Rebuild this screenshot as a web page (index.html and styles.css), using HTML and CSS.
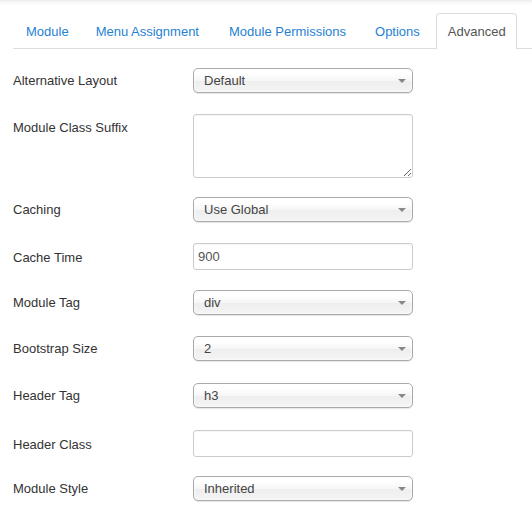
FILE: index.html
```html
<!DOCTYPE html>
<html>
<head>
<meta charset="utf-8">
<link rel="stylesheet" href="styles.css">
</head>
<body>
<div class="page">
  <ul class="tabs">
    <li class="tab">Module</li>
    <li class="tab">Menu Assignment</li>
    <li class="tab">Module Permissions</li>
    <li class="tab">Options</li>
    <li class="tab active">Advanced</li>
  </ul>
  <div class="form">
    <div class="row r-select"><label class="lbl">Alternative Layout</label><div class="select"><span>Default</span><i class="arrow"></i></div></div>
    <div class="row r-area"><label class="lbl lbl-top">Module Class Suffix</label><textarea class="area"></textarea></div>
    <div class="row r-select"><label class="lbl">Caching</label><div class="select"><span>Use Global</span><i class="arrow"></i></div></div>
    <div class="row r-input"><label class="lbl">Cache Time</label><div class="input">900</div></div>
    <div class="row r-select"><label class="lbl">Module Tag</label><div class="select"><span>div</span><i class="arrow"></i></div></div>
    <div class="row r-select"><label class="lbl">Bootstrap Size</label><div class="select"><span>2</span><i class="arrow"></i></div></div>
    <div class="row r-select"><label class="lbl">Header Tag</label><div class="select"><span>h3</span><i class="arrow"></i></div></div>
    <div class="row r-input"><label class="lbl">Header Class</label><div class="input"></div></div>
    <div class="row r-select"><label class="lbl">Module Style</label><div class="select"><span>Inherited</span><i class="arrow"></i></div></div>
  </div>
</div>
</body>
</html>
```

FILE: styles.css
```css
html, body {
  margin: 0;
  padding: 0;
  background: #fff;
}
body {
  font-family: "Liberation Sans", Arial, sans-serif;
  font-size: 13px;
  color: #333;
  width: 532px;
  height: 521px;
  overflow: hidden;
}
.page {
  padding-top: 13px;
  padding-left: 13px;
  background: linear-gradient(to bottom, #ececec 0px, #f7f7f7 2px, #fff 5px);
  background-repeat: no-repeat;
  background-size: 100% 6px;
}
.tabs {
  list-style: none;
  margin: 0;
  padding: 0;
  display: flex;
  border-bottom: 1px solid #ddd;
  height: 35px;
}
.tab {
  padding: 9px 12px 7px 12px;
  line-height: 18px;
  margin-right: 3px;
  color: #1f82d3;
  border: 1px solid transparent;
  border-bottom: none;
  border-radius: 4px 4px 0 0;
  height: 18px;
}
.tab:nth-child(2) { margin-left: -2px; }
.tab:nth-child(3) { margin-left: 1px; }
.tab.active {
  color: #555;
  border-color: #ddd;
  background: #fff;
  height: 19px;
  padding-left: 11px;
  padding-right: 10px;
}
.form {
  padding-top: 19px;
}
.row {
  display: flex;
}
.r-select { height: 46.6px; }
.r-input { height: 46.6px; }
.r-area { height: 82px; }
.r-area .lbl { margin-top: -1px; }
.lbl {
  width: 180px;
  line-height: 24px;
  padding-top: 1px;
  color: #333;
}
.r-input .lbl { line-height: 27px; }
.lbl-top { line-height: 26px; }
.select {
  position: relative;
  box-sizing: border-box;
  width: 220px;
  height: 25px;
  border: 1px solid #aaa;
  border-radius: 5px;
  background: linear-gradient(to bottom, #fff 20%, #f6f6f6 50%, #eee 52%, #f4f4f4 100%);
  box-shadow: 0 0 3px #fff inset, 0 1px 1px rgba(0,0,0,0.1);
  padding-left: 10px;
  line-height: 23px;
  color: #444;
}
.arrow {
  position: absolute;
  right: 6px;
  top: 10px;
  width: 0;
  height: 0;
  border-left: 4px solid transparent;
  border-right: 4px solid transparent;
  border-top: 4px solid #888;
}
.input {
  box-sizing: border-box;
  width: 220px;
  height: 27px;
  border: 1px solid #ccc;
  border-radius: 3px;
  padding-left: 4px;
  line-height: 25px;
  color: #555;
  box-shadow: inset 0 1px 1px rgba(0,0,0,0.04);
}
.area {
  box-sizing: border-box;
  width: 220px;
  height: 64px;
  margin: -1px 0 0 0;
  border: 1px solid #ccc;
  border-radius: 3px;
  resize: both;
  font-family: "Liberation Sans", Arial, sans-serif;
  font-size: 13px;
  box-shadow: inset 0 1px 1px rgba(0,0,0,0.04);
}
```
